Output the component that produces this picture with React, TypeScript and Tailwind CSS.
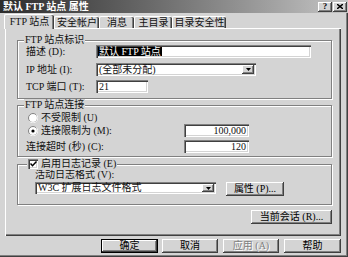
import type { ReactNode } from "react";

// Win2000-style bevels
const raised =
  "shadow-[inset_-1px_-1px_0_#404040,inset_1px_1px_0_#ffffff,inset_-2px_-2px_0_#808080]";
const defaultBevel =
  "shadow-[inset_0_0_0_1px_#000000,inset_-2px_-2px_0_#404040,inset_2px_2px_0_#ffffff,inset_-3px_-3px_0_#808080]";
const sunken =
  "shadow-[inset_1px_1px_0_#808080,inset_2px_2px_0_#404040,inset_-1px_-1px_0_#ffffff,inset_-2px_-2px_0_#d4d4d4]";
const etched =
  "border border-[#808080] shadow-[inset_1px_1px_0_#ffffff,1px_1px_0_#ffffff]";

function Button({
  className = "",
  bevel = raised,
  disabled = false,
  children,
}: {
  className?: string;
  bevel?: string;
  disabled?: boolean;
  children: ReactNode;
}) {
  return (
    <div
      className={`flex h-[14px] shrink-0 items-center justify-center bg-[#d4d4d4] leading-none whitespace-nowrap ${bevel} ${className} ${
        disabled ? "text-[#808080] [text-shadow:1px_1px_0_#ffffff]" : "text-black"
      }`}
    >
      {children}
    </div>
  );
}

function Arrow() {
  return (
    <svg width="5" height="3" viewBox="0 0 5 3">
      <polygon points="0,0 5,0 2.5,3" fill="#000000" />
    </svg>
  );
}

function Dropdown({ className, text }: { className: string; text: string }) {
  return (
    <div className={`flex shrink-0 bg-white p-[2px] ${sunken} ${className}`}>
      <span className="flex flex-1 items-center whitespace-nowrap pl-px leading-none">{text}</span>
      <div className={`flex h-full w-[12px] items-center justify-center bg-[#d4d4d4] ${raised}`}>
        <Arrow />
      </div>
    </div>
  );
}

function Field({ className, value }: { className: string; value: string }) {
  return (
    <div
      className={`flex h-[13px] shrink-0 items-center justify-end bg-white pr-[3px] leading-none ${sunken} ${className}`}
    >
      {value}
    </div>
  );
}

function Radio({ checked }: { checked?: boolean }) {
  return (
    <svg width="10" height="10" viewBox="0 0 10 10" className="shrink-0">
      <circle cx="5" cy="5" r="4.5" fill="#ffffff" stroke="#808080" />
      <path d="M1.6 8.4 A4.5 4.5 0 0 0 8.4 1.6" fill="none" stroke="#ffffff" />
      {checked && <circle cx="5" cy="5" r="1.6" fill="#000000" />}
    </svg>
  );
}

function Group({
  label,
  className,
  labelClass = "left-[6px]",
  children,
}: {
  label: ReactNode;
  className: string;
  labelClass?: string;
  children: ReactNode;
}) {
  return (
    <div className={`relative ml-[12px] w-[315px] ${etched} ${className}`}>
      <div
        className={`absolute -top-[7px] flex h-[12px] items-center bg-[#d4d4d4] px-px leading-none ${labelClass}`}
      >
        {label}
      </div>
      {children}
    </div>
  );
}

const tabs = [
  { label: "FTP 站点", w: "w-[50px]", active: true },
  { label: "安全帐户", w: "w-[45px]" },
  { label: "消息", w: "w-[35px]" },
  { label: "主目录", w: "w-[38px]" },
  { label: "目录安全性", w: "w-[54px]" },
];

export default function App() {
  return (
    <div className="flex h-[257px] w-[348px] flex-col bg-[#d4d4d4] font-[family-name:Liberation_Serif,Noto_Sans_CJK_SC,serif] text-[10px] leading-none text-[#111111] shadow-[inset_-1px_-1px_0_#404040,inset_-2px_-2px_0_#808080]">
      {/* title bar */}
      <div className="flex h-[13px] shrink-0 items-center bg-linear-to-r from-[#2c2c2c] to-[#c6c6c6] pl-[3px] pr-px">
        <span className="flex-1 font-bold whitespace-nowrap text-white">默认 FTP 站点 属性</span>
        <div className={`flex h-[10px] w-[14px] items-center justify-center bg-[#d4d4d4] text-[9px] font-bold ${raised}`}>
          ?
        </div>
        <div className={`ml-px flex h-[10px] w-[14px] items-center justify-center bg-[#d4d4d4] ${raised}`}>
          <svg width="6" height="5" viewBox="0 0 6 5">
            <path d="M0 0 L6 5 M6 0 L0 5" stroke="#000000" strokeWidth="1.4" />
          </svg>
        </div>
      </div>

      <div className="flex flex-col px-[5px]">
        {/* tabs */}
        <div className="mt-px -ml-px flex h-[14px] items-end">
          {tabs.map((t) =>
            t.active ? (
              <div
                key={t.label}
                className={`relative z-10 -mb-px flex h-[15px] items-center justify-center rounded-t-[2px] border-t border-l border-white bg-[#d4d4d4] whitespace-nowrap shadow-[inset_-1px_0_0_#404040,inset_-2px_0_0_#808080] ${t.w}`}
              >
                {t.label}
              </div>
            ) : (
              <div
                key={t.label}
                className={`flex h-[12px] items-center justify-center rounded-t-[2px] border-t border-l border-white whitespace-nowrap shadow-[inset_-1px_0_0_#404040,inset_-2px_0_0_#808080] ${t.w}`}
              >
                {t.label}
              </div>
            ),
          )}
        </div>

        {/* tab panel */}
        <div className="flex h-[208px] w-[336px] flex-col pt-[12px] shadow-[inset_1px_1px_0_#ffffff,inset_-1px_-1px_0_#404040,inset_-2px_-2px_0_#808080]">
          <Group label="FTP 站点标识" className="h-[59px]">
            <div className="flex flex-col pt-[4px] pl-[8px]">
              <div className="flex h-[13px] items-center">
                <span className="w-[70px] whitespace-nowrap">描述 (D):</span>
                <div className={`flex h-[13px] w-[215px] bg-white p-[2px] ${sunken}`}>
                  <span className="flex h-full items-center bg-black px-px whitespace-nowrap text-white">
                    默认 FTP 站点
                  </span>
                </div>
              </div>
              <div className="mt-[5px] flex h-[13px] items-center">
                <span className="w-[70px] whitespace-nowrap">IP 地址 (I):</span>
                <Dropdown className="h-[13px] w-[160px]" text="(全部未分配)" />
              </div>
              <div className="mt-[4px] flex h-[13px] items-center">
                <span className="w-[70px] whitespace-nowrap">TCP 端口 (T):</span>
                <div className={`flex h-[13px] w-[52px] items-center bg-white pl-[3px] ${sunken}`}>21</div>
              </div>
            </div>
          </Group>

          <Group label="FTP 站点连接" className="mt-[6px] h-[52px]">
            <div className="flex flex-col pt-[6px]">
              <div className="flex h-[12px] items-center gap-[3px] pl-[10px]">
                <Radio />
                <span className="whitespace-nowrap">不受限制 (U)</span>
              </div>
              <div className="flex h-[13px] items-center">
                <div className="flex w-[166px] items-center gap-[3px] pl-[10px]">
                  <Radio checked />
                  <span className="whitespace-nowrap">连接限制为 (M):</span>
                </div>
                <Field className="w-[65px]" value="100,000" />
              </div>
              <div className="mt-[3px] flex h-[13px] items-center">
                <span className="w-[166px] pl-[8px] whitespace-nowrap">连接超时 (秒) (C):</span>
                <Field className="w-[65px]" value="120" />
              </div>
            </div>
          </Group>

          <Group
            className="mt-[7px] h-[41px]"
            labelClass="left-[9px] gap-[3px]"
            label={
              <>
                <div className={`flex h-[10px] w-[10px] items-center justify-center bg-white ${sunken}`}>
                  <svg width="7" height="6" viewBox="0 0 7 6">
                    <path d="M0.5 2.5 L2.5 4.7 L6.5 0.5" fill="none" stroke="#000000" strokeWidth="1.5" />
                  </svg>
                </div>
                <span className="whitespace-nowrap">启用日志记录 (E)</span>
              </>
            }
          >
            <div className="flex flex-col pt-[4px] pl-[17px]">
              <div className="flex h-[12px] items-center whitespace-nowrap">活动日志格式 (V):</div>
              <div className="mt-px flex items-start">
                <Dropdown className="h-[12px] w-[181px]" text="W3C 扩展日志文件格式" />
                <Button className="ml-[10px] w-[58px]">属性 (P)...</Button>
              </div>
            </div>
          </Group>

          <Button className="mt-[5px] ml-[246px] w-[81px]">当前会话 (R)...</Button>
        </div>

        {/* dialog buttons */}
        <div className="mt-[3px] ml-[96px] flex">
          <Button bevel={defaultBevel} className="w-[57px]">
            确定
          </Button>
          <Button className="ml-[4px] w-[56px]">取消</Button>
          <Button disabled className="ml-[5px] w-[56px]">
            应用 (A)
          </Button>
          <Button className="ml-[5px] w-[57px]">帮助</Button>
        </div>
      </div>
    </div>
  );
}
